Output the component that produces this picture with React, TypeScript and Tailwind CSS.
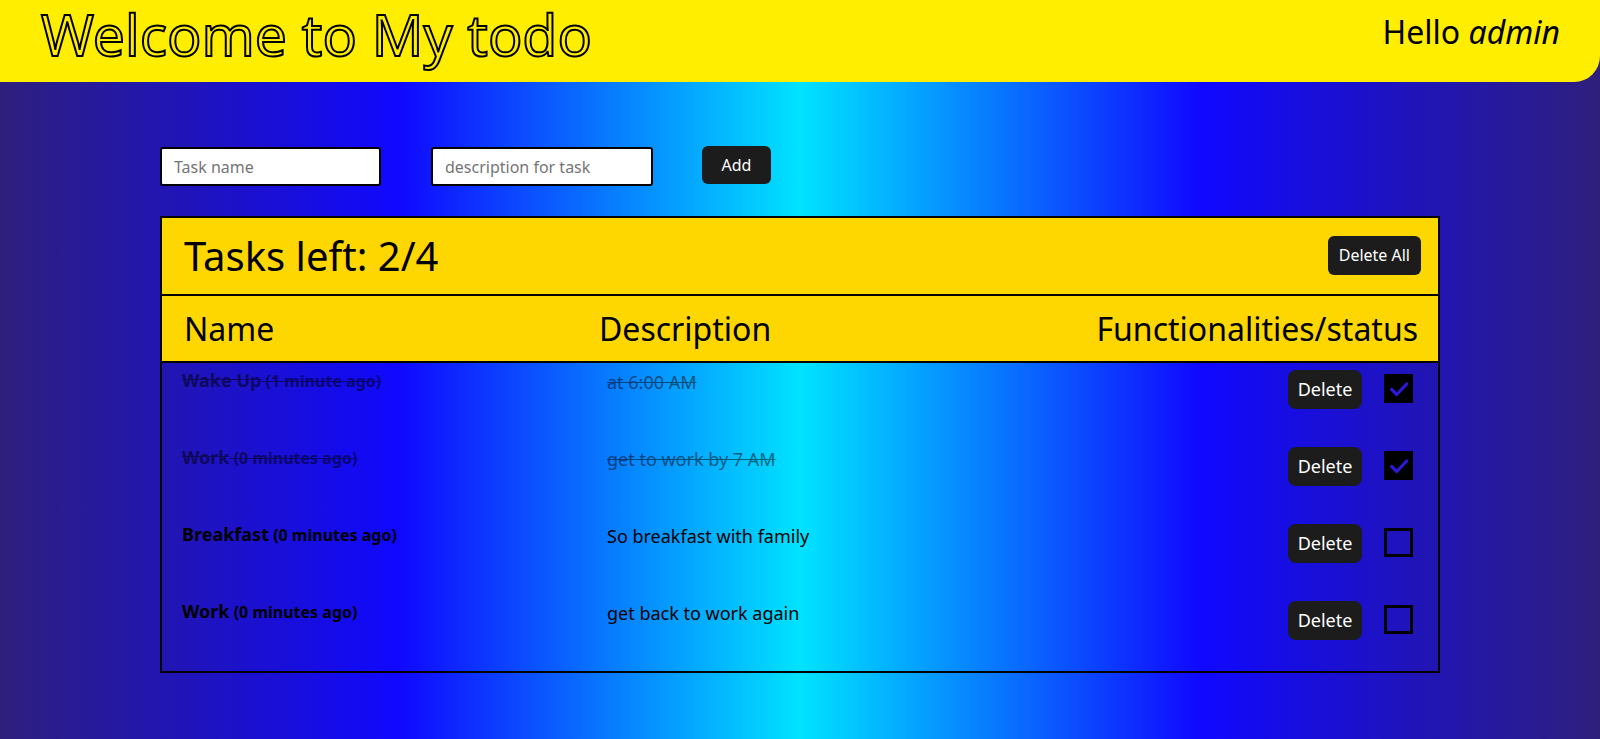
import React from "react";

type Task = {
  name: string;
  ago: string;
  description: string;
  done: boolean;
};

const tasks: Task[] = [
  { name: "Wake Up", ago: "(1 minute ago)", description: "at 6:00 AM", done: true },
  { name: "Work", ago: "(0 minutes ago)", description: "get to work by 7 AM", done: true },
  { name: "Breakfast", ago: "(0 minutes ago)", description: "So breakfast with family", done: false },
  { name: "Work", ago: "(0 minutes ago)", description: "get back to work again", done: false },
];

function CheckBox({ checked }: { checked: boolean }) {
  return (
    <span
      className={`flex h-[29px] w-[29px] items-center justify-center border-[3px] border-black ${
        checked ? "bg-black" : "bg-transparent"
      }`}
    >
      {checked && (
        <svg viewBox="0 0 24 24" className="h-[22px] w-[22px]" fill="none">
          <path d="M4 12.5l5.5 5.5L20.5 6.5" stroke="#2a1ad6" strokeWidth="3.5" strokeLinecap="round" strokeLinejoin="round" />
        </svg>
      )}
    </span>
  );
}

export default function App() {
  return (
    <div className="min-h-screen bg-[linear-gradient(90deg,#2e1f7c_0%,#1008ff_25%,#00e3ff_50%,#1008ff_75%,#2e1f7c_100%)] font-['Noto_Sans',sans-serif] text-black">
      {/* Header */}
      <header className="flex h-[82px] items-start justify-between rounded-br-[26px] bg-[#ffee00] px-[40px]">
        <h1 className="mt-[2px] shrink-0 whitespace-nowrap px-[1px] text-[57px] leading-[1.15] font-normal text-[#ffee00] [-webkit-text-stroke:2px_black]">
          Welcome to My todo
        </h1>
        <p className="mt-[13px] text-[32px] leading-[1.2]">
          Hello <em>admin</em>
        </p>
      </header>

      <main className="mx-auto w-[80%] pt-[65px]">
        {/* Add form */}
        <div className="flex items-start">
          <input
            placeholder="Task name"
            className="h-[39px] w-[221px] rounded-[3px] border-2 border-black bg-white px-[12px] text-[16px] outline-none placeholder:text-[#757575]"
          />
          <input
            placeholder="description for task"
            className="ml-[50px] h-[39px] w-[222px] rounded-[3px] border-2 border-black bg-white px-[12px] text-[16px] outline-none placeholder:text-[#757575]"
          />
          <button className="ml-[49px] mt-[-1px] h-[38px] w-[69px] rounded-[6px] bg-[#1c1c1c] text-[16px] text-white">
            Add
          </button>
        </div>

        {/* Tasks table */}
        <div className="mt-[30px] border-2 border-black">
          <div className="flex h-[78px] items-center justify-between border-b-2 border-black bg-[#ffd700] pl-[22px] pr-[17px]">
            <h2 className="text-[40px] leading-none">Tasks left: 2/4</h2>
            <button className="mb-[2px] h-[39px] rounded-[6px] bg-[#1c1c1c] px-[11px] text-[16px] text-white">
              Delete All
            </button>
          </div>
          <div className="flex h-[67px] items-center border-b-2 border-black bg-[#ffd700] pr-[20px] text-[32px]">
            <span className="w-[437px] pl-[22px]">Name</span>
            <span className="flex-1">Description</span>
            <span>Functionalities/status</span>
          </div>

          {tasks.map((task, i) => (
            <div key={i} className="flex h-[77px] items-start pr-[25px]">
              <div
                className={`w-[445px] pl-[20px] pt-[4px] font-bold ${
                  task.done ? "line-through opacity-50" : ""
                }`}
              >
                <span className="text-[18px]">{task.name}</span>{" "}
                <span className="text-[16px]">{task.ago}</span>
              </div>
              <div className={`flex-1 pt-[6px] text-[18px] ${task.done ? "line-through opacity-50" : ""}`}>
                {task.description}
              </div>
              <button className="mt-[7px] h-[39px] w-[74px] rounded-[8px] bg-[#1c1c1c] text-[18px] text-white">
                Delete
              </button>
              <div className="ml-[22px] mt-[11px]">
                <CheckBox checked={task.done} />
              </div>
            </div>
          ))}
        </div>
      </main>
    </div>
  );
}
